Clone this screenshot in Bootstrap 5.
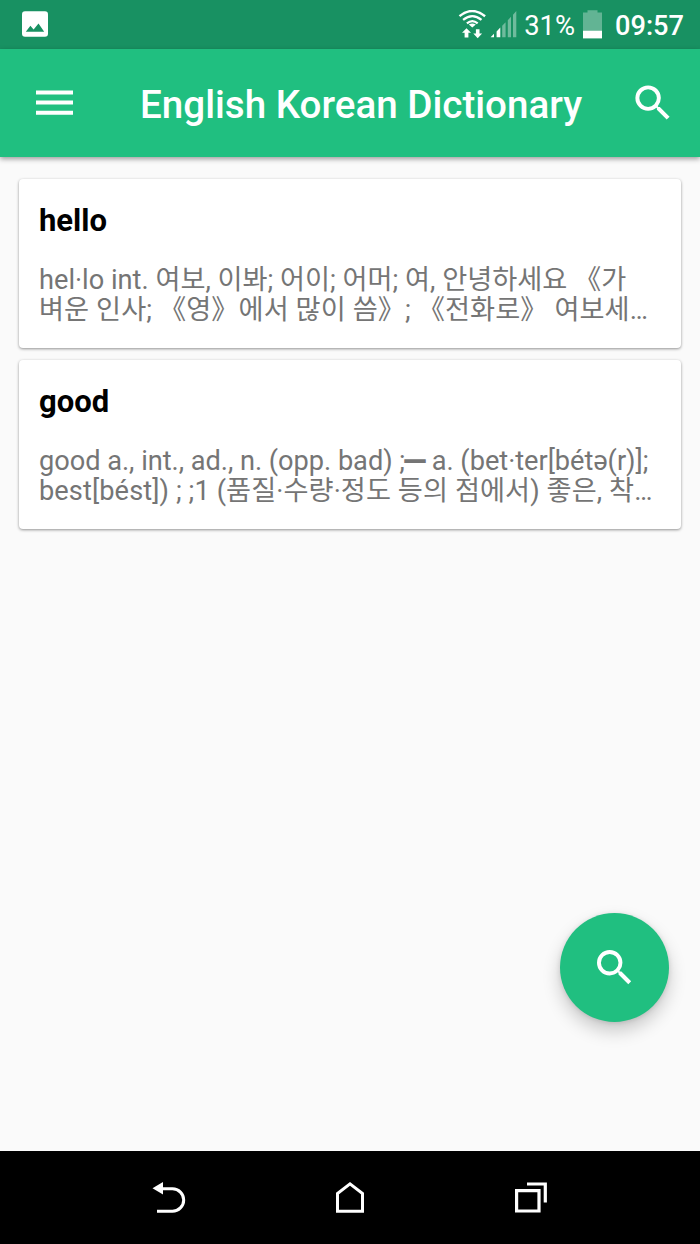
<!DOCTYPE html>
<html lang="en">
<head>
<meta charset="utf-8">
<meta name="viewport" content="width=device-width, initial-scale=1">
<title>English Korean Dictionary</title>
<link href="https://cdn.jsdelivr.net/npm/bootstrap@5.3.0/dist/css/bootstrap.min.css" rel="stylesheet">
<style>
body{font-family:Roboto,"Noto Sans CJK KR",sans-serif;background:#fafafa;height:1244px;overflow:hidden}
svg{display:block;flex:none}
.status{height:48.6px;background:#189162;padding:0 16px 0 22px;font-size:27.4px;line-height:48px}
.status span{padding-top:4px}
.pct{margin-left:7px}
.battery{margin-left:8px}
.clock{font-weight:500;font-size:27.2px;margin-left:13px}
.appbar{height:108.4px;background:#20bf80;padding:0 30px 0 36px;box-shadow:0 2px 5px rgba(0,0,0,.38);z-index:1}
.appbar h1{font-size:38.6px;font-weight:500;line-height:46px;white-space:nowrap;margin:5px 0 0 67px}
.words{padding:22px 19px;gap:12px}
.entry{height:169px;border:0;border-radius:4px;padding:23px 20px 0;box-shadow:0 1px 3px rgba(0,0,0,.42)}
.entry h2{font-size:31px;line-height:38px;font-weight:700;color:#000;margin:0 0 25px}
.entry p{font-size:27.2px;line-height:30px;color:#757575;margin:0}
.entry p span{display:block;white-space:nowrap}
.entry .wider{letter-spacing:.09px}
.entry .tighter{letter-spacing:-.03px}
.entry p b{font-size:20px;line-height:1;font-weight:700;position:relative;top:-1px;-webkit-text-stroke:1.4px #757575}
.fab{width:109px;height:109px;right:31px;bottom:222px;border:0;background:#20bf80;box-shadow:0 9px 18px rgba(0,0,0,.2),0 1px 5px rgba(0,0,0,.12)}
.sysnav{height:93px;background:#000;padding:31px 152px 0 152px}
.sysnav svg:nth-child(2){margin-right:2px}
</style>
</head>
<body class="d-flex flex-column position-relative">
<header class="status d-flex align-items-center text-white">
  <svg width="26" height="26" viewBox="0 0 26 26"><rect width="26" height="25.5" rx="3" y=".2" fill="#fff"/><path d="M3.8 20.7 8.4 14.8 11.6 18.6 16.5 12.6 22.2 20.7z" fill="#189162"/></svg>
  <svg class="ms-auto" width="28" height="29" viewBox="0 0 28 29" fill="none" stroke="#fff"><path d="M1.5 6.2Q14-4.2 27.1 6.2" stroke-width="2.4"/><path d="M5.1 9.9Q14.3 2.2 23.5 9.9M8.9 13.4Q14.3 8.8 19.7 13.4" stroke-width="2.2"/><path d="M10.8 14.6Q14.3 12.2 17.8 14.6L14.3 17.6z" fill="#fff" stroke="none"/><path d="M4 22.8 8.5 18.3 13 22.8H10.4V27.4H6.6V22.8zM15.3 23.5H17.9V19.2H21.5V23.5H24.1L19.7 28.3z" fill="#fff" stroke="none"/></svg>
  <svg class="ms-1" width="27" height="29" viewBox="0 0 27 29" fill="#fff"><path d="M.6 27.3 4 23.8V27.3zM6.6 21.4 10.3 17.6V27.3H6.6z"/><path d="M12.2 15.8 15.6 12.2V27.3H12.2zM17.8 10.2 21 6.8V27.3H17.8zM23 4.7 26.3 1V27.3H23z" opacity=".38"/></svg>
  <span class="pct">31%</span>
  <svg class="battery" width="19" height="29" viewBox="0 0 19 29" fill="#fff"><path d="M4.5.3h10v2.3H19V20.6H0V2.6h4.5z" opacity=".32"/><path d="M0 20.6h19v7.8H0z"/></svg>
  <span class="clock">09:57</span>
</header>
<nav class="appbar d-flex align-items-center text-white position-relative">
  <svg width="37" height="26" viewBox="0 0 37 26" fill="#fff"><path d="M0 .4h37v4H0zM0 10.5h37v4H0zM0 20.7h37v4H0z"/></svg>
  <h1>English Korean Dictionary</h1>
  <svg class="ms-auto" width="35" height="35" viewBox="2.8 2.8 17.9 17.9" fill="#fff"><path d="M15.5 14h-.79l-.28-.27A6.47 6.47 0 0 0 16 9.5 6.5 6.5 0 1 0 9.5 16c1.61 0 3.09-.59 4.23-1.57l.27.28v.79l5 4.99L20.49 19zM9.5 14a4.5 4.5 0 1 1 0-9 4.5 4.5 0 0 1 0 9z"/></svg>
</nav>
<main class="words d-flex flex-column flex-grow-1">
  <article class="card entry"><h2>hello</h2>
    <p><span>hel·lo int. 여보, 이봐; 어이; 어머; 여, 안녕하세요 《가</span><span class="wider">벼운 인사; 《영》에서 많이 씀》; 《전화로》 여보세…</span></p></article>
  <article class="card entry"><h2>good</h2>
    <p><span class="tighter">good a., int., ad., n. (opp. bad) ;<b>━</b> a. (bet·ter[bétə(r)];</span><span class="wider">best[bést]) ; ;1 (품질·수량·정도 등의 점에서) 좋은, 착…</span></p></article>
</main>
<button class="fab position-absolute rounded-circle d-flex align-items-center justify-content-center p-0" aria-label="Search"><svg width="35" height="35" viewBox="3 3 17.9 17.9" fill="#fff"><path d="M15.5 14h-.79l-.28-.27A6.47 6.47 0 0 0 16 9.5 6.5 6.5 0 1 0 9.5 16c1.61 0 3.09-.59 4.23-1.57l.27.28v.79l5 4.99L20.49 19zM9.5 14a4.5 4.5 0 1 1 0-9 4.5 4.5 0 0 1 0 9z"/></svg></button>
<footer class="sysnav d-flex justify-content-between align-items-start">
  <svg width="35" height="32" viewBox="0 0 35 32"><path d="M10 6.8H20.5A11.2 11.2 0 0 1 20.5 29.2H5" fill="none" stroke="#fff" stroke-width="3"/><path d="M.5 6.2 11 0V12.4z" fill="#fff"/></svg>
  <svg width="30" height="32" viewBox="0 0 30 32" fill="none" stroke="#fff" stroke-width="3"><path d="M2.5 29.2V11.5L15 1.9 27.5 11.5V29.2z"/></svg>
  <svg width="34" height="32" viewBox="0 0 34 32" fill="none" stroke="#fff" stroke-width="3.2"><path d="M2.6 8.6H25V29H2.6zM13 2H31.3V20.5"/></svg>
</footer>
<script src="https://cdn.jsdelivr.net/npm/bootstrap@5.3.0/dist/js/bootstrap.bundle.min.js"></script>
</body>
</html>
